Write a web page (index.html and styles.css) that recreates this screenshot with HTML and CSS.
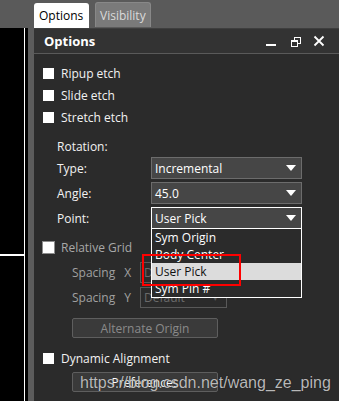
FILE: index.html
```html
<!DOCTYPE html>
<html>
<head>
<meta charset="utf-8">
<link rel="stylesheet" href="styles.css">
</head>
<body>
<div class="app">
  <div class="tabbar">
    <div class="tab active">Options</div>
    <div class="tab">Visibility</div>
  </div>
  <div class="main">
    <div class="canvas"><div class="hline"></div></div>
    <div class="gutter"></div>
    <div class="panel">
      <div class="phead">
        <span class="ptitle">Options</span>
        <svg class="pctrl" width="60" height="26" viewBox="0 0 60 26">
          <rect x="0" y="16" width="10" height="2" fill="#fff"/>
          <rect x="28.5" y="9.5" width="6" height="6" fill="none" stroke="#fff" stroke-width="1"/>
          <rect x="25.5" y="12.5" width="6" height="6" fill="#333" stroke="#fff" stroke-width="1"/>
          <rect x="25" y="12" width="7" height="2" fill="#fff"/>
          <path d="M48.5 8.5 L57.5 17.5 M57.5 8.5 L48.5 17.5" stroke="#fff" stroke-width="1.8" fill="none"/>
        </svg>
      </div>
      <div class="pbody">
        <div class="chk-row"><span class="box"></span><span class="lbl">Ripup etch</span></div>
        <div class="chk-row"><span class="box"></span><span class="lbl">Slide etch</span></div>
        <div class="chk-row"><span class="box"></span><span class="lbl">Stretch etch</span></div>
        <div class="section">Rotation:</div>
        <div class="form">
          <span class="flabel">Type:</span>
          <div class="select"><span>Incremental</span><svg class="arrow" width="10" height="6" viewBox="0 0 10 6"><polygon points="0,0 10,0 5,6" fill="#fff"/></svg></div>
          <span class="flabel">Angle:</span>
          <div class="select"><span>45.0</span><svg class="arrow" width="10" height="6" viewBox="0 0 10 6"><polygon points="0,0 10,0 5,6" fill="#fff"/></svg></div>
          <span class="flabel">Point:</span>
          <div class="select focus"><span>User Pick</span><svg class="arrow" width="10" height="6" viewBox="0 0 10 6"><polygon points="0,0 10,0 5,6" fill="#fff"/></svg>
            <ul class="list">
              <li>Sym Origin</li>
              <li>Body Center</li>
              <li class="sel">User Pick</li>
              <li>Sym Pin #</li>
            </ul>
            <div class="redbox"></div>
          </div>
        </div>
        <div class="chk-row rel"><span class="box dis"></span><span class="lbl grey">Relative Grid</span></div>
        <div class="sp-row"><span class="sp-lbl"><span>Spacing</span><span>X</span></span><div class="input"><span>Default</span></div></div>
        <div class="sp-row"><span class="sp-lbl"><span>Spacing</span><span>Y</span></span><div class="input"><span>Default</span><span class="mini">&#9662;</span></div></div>
        <div class="btn dis">Alternate Origin</div>
        <div class="chk-row dyn"><span class="box"></span><span class="lbl">Dynamic Alignment</span></div>
        <div class="btn pref">Preferences
          <span class="watermark">https://blog.csdn.net/wang_ze_ping</span>
        </div>
      </div>
    </div>
  </div>
</div>
</body>
</html>
```

FILE: styles.css
```css
* { box-sizing: border-box; margin: 0; padding: 0; }
html, body { width: 339px; height: 401px; overflow: hidden; background: #000; }
body { font-family: "Open Sans", "Noto Sans", sans-serif; font-size: 12px; color: #f2f2f2; }
.app { display: flex; flex-direction: column; width: 339px; height: 401px; }
.tabbar { height: 28px; background: #5a5a5a; display: flex; align-items: flex-end; padding-left: 34px; gap: 6px; flex: none; }
.tab { height: 25px; padding: 0 5px; display: flex; align-items: center; border-radius: 3px 3px 0 0; }
.tab.active { background: #fff; color: #000; width: 55px; }
.tab:not(.active) { background: #7a7a7a; color: #dadada; width: 56px; margin-bottom: 1px; border: 1px solid #888; border-bottom: none; padding-left: 4px; }
.main { flex: 1; display: flex; }
.canvas { width: 25px; background: #000; border-right: 1px solid #fff; flex: none; }
.hline { margin-top: 226px; height: 2px; background: #fff; width: 24px; }
.gutter { width: 9px; flex: none; background: linear-gradient(to right, #000 3px, #5c5c5c 3px); }
.panel { flex: 1; background: #2b2b2b; display: flex; flex-direction: column; }
.phead { height: 26px; background: #333; border-top: 1px solid #3e3e3e; border-bottom: 1px solid #5a5a5a; display: flex; align-items: center; padding-left: 10px; }
.ptitle { font-weight: 700; font-size: 13px; color: #fff; }
.pctrl { margin-left: auto; margin-right: 13px; margin-top: -1px; }
.pbody { padding-top: 8px; display: flex; flex-direction: column; }
.chk-row { height: 22px; display: flex; align-items: center; padding-left: 9px; }
.box { width: 11px; height: 11px; background: #fff; margin-right: 7px; flex: none; }
.box.dis { width: 13px; height: 13px; border: 1px solid #8c8c8c; margin-left: -1px; margin-right: 6px; }
.lbl.grey { color: #a8a8a8; }
.section { height: 22px; display: flex; align-items: center; padding-left: 23px; margin-top: 7px; }
.form { display: grid; grid-template-columns: 94px 151px; row-gap: 3px; padding-left: 23px; margin-top: 0px; }
.flabel { display: flex; align-items: center; height: 22px; padding-top: 1px; }
.select { position: relative; height: 22px; background: #464646; border: 1px solid #6c6c6c; display: flex; align-items: center; padding-left: 3px; color: #fff; }
.select.focus { border-color: #fff; }
.arrow { position: absolute; right: 5px; top: 7px; }
.list { position: absolute; left: -1px; top: 20px; width: 151px; list-style: none; background: #2b2b2b; border: 1px solid #fff; z-index: 5; }
.list li { height: 17px; display: flex; align-items: center; padding-left: 3px; color: #fff; }
.list li.sel { background: #dcdcdc; color: #111; }
.redbox { position: absolute; left: -10px; top: 46px; width: 99px; height: 32px; border: 2px solid #f00; z-index: 6; }
.rel { margin-top: 7px; }
.sp-row { height: 21px; display: flex; align-items: center; padding-left: 38px; color: #a0a0a0; margin-top: 4px; }
.rel + .sp-row { margin-top: 4px; }
.sp-lbl { width: 68px; display: flex; gap: 9px; }
.input { width: 87px; height: 21px; border: 1px solid #595959; background: #2b2b2b; display: flex; align-items: center; padding-left: 3px; color: #6a6a6a; position: relative; }
.mini { position: absolute; right: 8px; top: 3px; font-size: 9px; color: #555; }
.btn { position: relative; margin-left: 38px; width: 146px; height: 20px; border: 1px solid #5e5e5e; border-radius: 2px; background: #3a3a3a; display: flex; align-items: center; justify-content: center; }
.btn.dis { color: #8a8a8a; margin-top: 10px; }
.dyn { margin-top: 9px; }
.pref { margin-top: 3px; color: #fff; }
.watermark { position: absolute; left: 7px; top: 1px; font-family: "Liberation Sans", Arial, sans-serif; font-size: 16px; color: rgba(215, 215, 215, 0.85); white-space: nowrap; text-shadow: 0 0 1px rgba(0,0,0,0.6); }
```
